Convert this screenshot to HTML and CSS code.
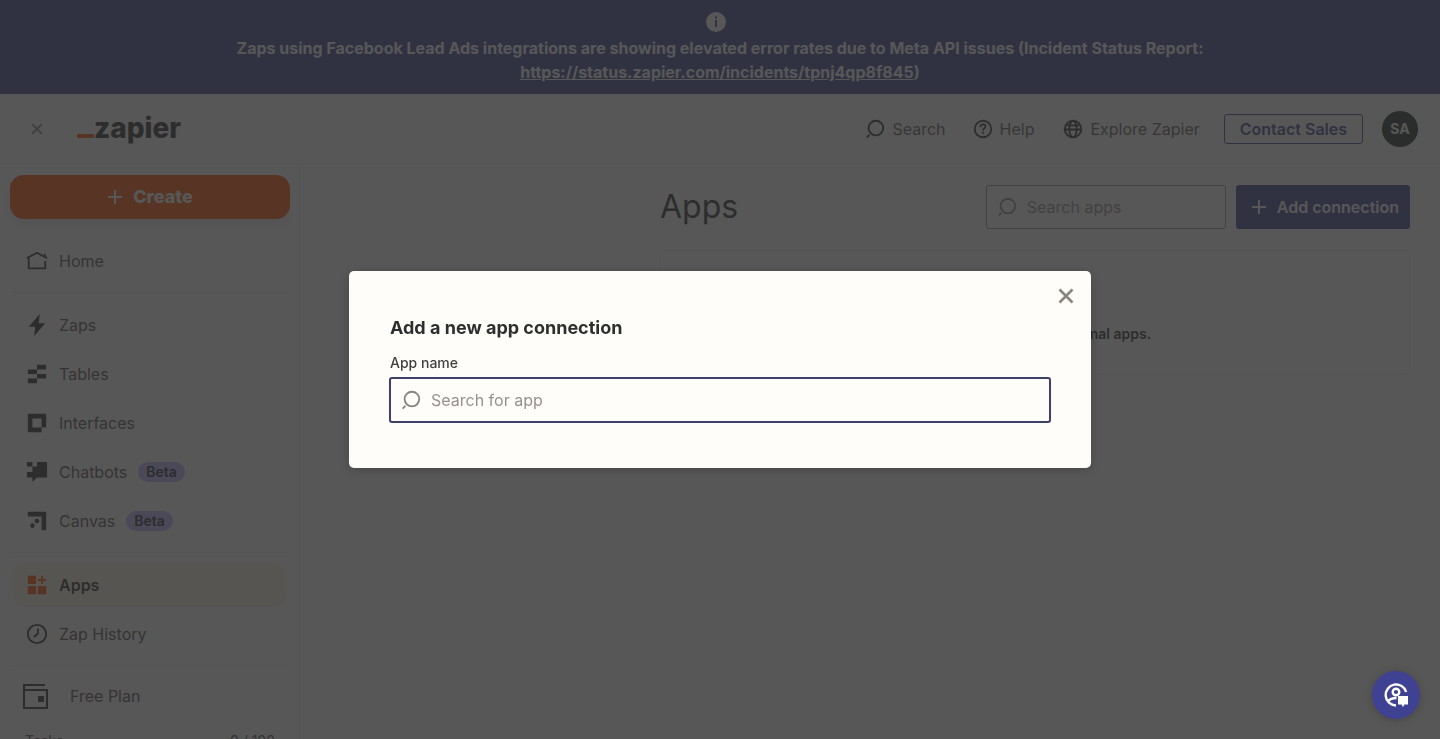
FILE: index.html
```html
<!DOCTYPE html>
<html lang="en">
<head>
<meta charset="utf-8">
<meta name="viewport" content="width=device-width, initial-scale=1">
<title>Apps | Zapier</title>
<link rel="stylesheet" href="styles.css">
</head>
<body>
<svg class="sprite" aria-hidden="true">
  <symbol id="i-search" viewBox="0 0 24 24"><circle cx="13" cy="11" r="8" fill="none" stroke="currentColor" stroke-width="2"/><path d="M5.2 17.6 6.600 19 3.600 22 2.200 20.600z" fill="currentColor"/></symbol>
  <symbol id="i-plus" viewBox="0 0 16 16"><path d="M8 1v14M1 8h14" fill="none" stroke="currentColor" stroke-width="2"/></symbol>
  <symbol id="i-close" viewBox="0 0 16 16"><path d="M1.500 1.500l13 13M14.500 1.500l-13 13" fill="none" stroke="currentColor" stroke-width="2.600"/></symbol>
</svg>

<div class="page">
  <aside class="banner">
    <svg class="banner-icon" viewBox="0 0 24 24" aria-hidden="true"><circle cx="12" cy="12" r="10" fill="currentColor"/><path d="M11 6.500h2v2h-2zM11 10h2v7h-2z" fill="#3d4592"/></svg>
    <p class="banner-text">Zaps using Facebook Lead Ads integrations are showing elevated error rates due to Meta API issues (Incident Status Report: <a href="#">https://status.zapier.com/incidents/tpnj4qp8f845</a>)</p>
  </aside>

  <header class="topbar">
    <button class="icon-btn" aria-label="Close sidebar"><svg width="12" height="12"><use href="#i-close"/></svg></button>
    <a class="logo" href="#"><span class="logo-dash"></span>zapier</a>
    <nav class="topnav">
      <a class="toplink" href="#"><svg width="22" height="22"><use href="#i-search"/></svg>Search</a>
      <a class="toplink" href="#"><svg width="22" height="22" viewBox="0 0 24 24" fill="none" stroke="currentColor" stroke-width="2"><circle cx="12" cy="12" r="9"/><path d="M9.300 10.200V9.500C9.300 8 10.400 7 12 7s2.700 1 2.700 2.300c0 1.900-2.700 2-2.700 4.200M12 15v2.200"/></svg>Help</a>
      <a class="toplink explore" href="#"><svg width="22" height="22" viewBox="0 0 24 24" fill="none" stroke="currentColor" stroke-width="2"><circle cx="12" cy="12" r="9"/><ellipse cx="12" cy="12" rx="4" ry="9"/><path d="M2 12.500h20M5 8h14"/></svg>Explore Zapier</a>
    </nav>
    <button class="contact">Contact Sales</button>
    <button class="avatar" aria-label="Account">SA</button>
  </header>

  <div class="body">
    <nav class="sidebar">
      <button class="create"><svg width="16" height="16"><use href="#i-plus"/></svg>Create</button>
      <div class="group">
        <a class="item" href="#"><svg viewBox="0 0 24 24" fill="none" stroke="currentColor" stroke-width="2"><path d="M21 12v8H3V9M.800 9 12 3l11.200 6M20.500 8V4"/></svg>Home</a>
      </div>
      <div class="group">
        <a class="item" href="#"><svg class="solid" viewBox="0 0 24 24"><path d="M15 0 3 14h7L9 24 21 10h-7z"/></svg>Zaps</a>
        <a class="item" href="#"><svg class="solid" viewBox="0 0 24 24"><path d="M12 2h10v5H12zM2 7h10v5H2zM12 12h10v5H12zM2 17h10v5H2z"/></svg>Tables</a>
        <a class="item" href="#"><svg class="solid" viewBox="0 0 24 24"><path fill-rule="evenodd" d="M2 2h20v15h-5v5H2zM7 7v10h10V7z"/></svg>Interfaces</a>
        <a class="item" href="#"><svg class="solid" viewBox="0 0 24 24"><path d="M1 1h6v5h5V1h11v17H12l-5 5v-5H1v-6h6V6H1z"/></svg>Chatbots<span class="beta">Beta</span></a>
        <a class="item" href="#"><svg class="solid" viewBox="0 0 24 24"><path d="M2 2h20v20h-5V7H2z"/><circle cx="12" cy="12" r="2.500"/><circle cx="7" cy="17" r="2.500"/></svg>Canvas<span class="beta">Beta</span></a>
      </div>
      <div class="group">
        <a class="item active" href="#"><svg viewBox="0 0 24 24" fill="#ff4f00"><path d="M2 2h9v9H2zM2 13h9v9H2zM13 13h9v9h-9zM16.500 2h2v3.500H22v2h-3.500V11h-2V7.500H13v-2h3.500z"/></svg>Apps</a>
        <a class="item" href="#"><svg viewBox="0 0 24 24" fill="none" stroke="currentColor" stroke-width="2"><circle cx="12" cy="12" r="10"/><path d="M13 6v5.500L8.500 15.500"/></svg>Zap History</a>
      </div>
      <div class="group plan-group">
        <a class="plan" href="#"><svg viewBox="0 0 28 28" fill="none" stroke="currentColor" stroke-width="2"><path d="M24 3H3v23h23V8H3"/><path d="M18 15h4v4h-4z" fill="currentColor"/></svg>Free Plan</a>
        <div class="usage"><span>Tasks</span><span>0 / 100</span></div>
      </div>
    </nav>

    <main class="main">
      <div class="content">
        <div class="heading">
          <h1>Apps</h1>
          <label class="field search-apps"><svg width="22" height="22"><use href="#i-search"/></svg><input type="search" placeholder="Search apps" aria-label="Search apps"></label>
          <button class="add"><svg width="16" height="16"><use href="#i-plus"/></svg>Add connection</button>
        </div>
        <section class="empty"><p>You don't have any personal apps.</p></section>
      </div>
    </main>
  </div>
</div>

<div class="overlay">
  <section class="dialog" role="dialog" aria-modal="true" aria-labelledby="dialog-title">
    <button class="dialog-close" aria-label="Close"><svg width="16" height="16"><use href="#i-close"/></svg></button>
    <h2 id="dialog-title">Add a new app connection</h2>
    <label class="dialog-label" for="app-name">App name</label>
    <div class="field app-field"><svg width="22" height="22"><use href="#i-search"/></svg><input id="app-name" type="text" placeholder="Search for app"></div>
  </section>
</div>

<button class="support" aria-label="Support"><svg width="26" height="26" viewBox="0 0 26 26" fill="none" stroke="currentColor" stroke-width="2.400"><path d="M23.200 10A10.500 10.500 0 1 0 13 23.500"/><circle cx="13" cy="10" r="3.300"/><path d="M5 19.500c2-3 5-3.500 8.500-3.500"/><path d="M15 14h10v8.500h-3.500L20 25l-1.500-2.500H15z" fill="currentColor" stroke="none"/></svg></button>
</body>
</html>
```
FILE: styles.css
```css
* { box-sizing: border-box; }
body {
  margin: 0;
  font: 400 16px/24px Inter, "Liberation Sans", sans-serif;
  color: #2d2e2e;
  background: #fff;
}
a { color: inherit; text-decoration: none; }
button { font: inherit; color: inherit; border: 0; background: none; padding: 0; cursor: pointer; }
h1, h2, p { margin: 0; }
svg { flex: none; }
.sprite { position: absolute; width: 0; height: 0; }

.page { display: flex; flex-direction: column; height: 100vh; overflow: hidden; }

.banner {
  flex: none;
  display: flex;
  flex-direction: column;
  align-items: center;
  gap: 2px;
  padding: 10px 24px;
  background: #3d4592;
  color: #fff;
  text-align: center;
}
.banner-icon { width: 24px; height: 24px; margin-right: 8px; }
.banner-text { max-width: 1000px; font-weight: 700; }
.banner-text a { text-decoration: underline; }

.topbar {
  flex: none;
  display: flex;
  align-items: center;
  height: 70px;
  padding: 0 22px 0 31px;
  border-bottom: 1px solid #f2f2f2;
}
.icon-btn { display: flex; color: #888; }
.logo {
  display: flex;
  align-items: baseline;
  margin-left: 34px;
  padding-bottom: 2px;
  font-size: 28px;
  line-height: 32px;
  font-weight: 800;
}
.logo-dash { width: 17px; height: 4px; background: #ff4f00; }
.topnav { display: flex; gap: 26px; margin-left: auto; color: #5f5c5a; }
.toplink { display: flex; align-items: center; gap: 6px; }
.toplink svg { color: #2d2e2e; }
.explore { margin-left: 2px; }
.contact {
  height: 30px;
  margin-left: 24px;
  padding: 0 15px;
  border: 1px solid #3d4592;
  border-radius: 3px;
  color: #3d4592;
  font-weight: 600;
}
.avatar {
  width: 36px;
  height: 36px;
  margin-left: 19px;
  border-radius: 50%;
  background: #1f2e24;
  color: #fff;
  font-size: 14px;
  font-weight: 700;
}

.body { flex: 1; display: flex; min-height: 0; }
.sidebar {
  flex: none;
  width: 300px;
  padding: 11px 10px 0;
  border-right: 1px solid #ececec;
  overflow: hidden;
}
.create {
  display: flex;
  align-items: center;
  justify-content: center;
  gap: 10px;
  width: 280px;
  height: 44px;
  margin-bottom: 10px;
  border-radius: 14px;
  background: #ff4f00;
  color: #fff;
  font-size: 18px;
  font-weight: 800;
  box-shadow: 0 8px 8px #eee;
}
.group {
  display: flex;
  flex-direction: column;
  gap: 5px;
  padding: 10px 2px 9px 3px;
  border-bottom: 1px solid #eee;
}
.item {
  display: flex;
  align-items: center;
  gap: 11px;
  height: 44px;
  padding: 0 13px;
  border-radius: 14px;
  color: #574e4c;
}
.item svg { width: 22px; height: 22px; color: #2d2e2e; }
.item .solid { fill: currentColor; }
.item.active { background: #fff3e0; color: #2d2e2e; font-weight: 600; }
.beta {
  padding: 0 8px;
  border-radius: 10px;
  background: #c2b8ff;
  color: #2d2e2e;
  font-size: 14px;
  line-height: 20px;
  font-weight: 600;
}
.plan-group { padding-top: 9px; border-bottom: 0; gap: 10px; color: #574e4c; }
.plan { display: flex; align-items: center; gap: 21px; height: 42px; padding-left: 8px; }
.plan svg { width: 28px; height: 28px; color: #2d2e2e; }
.usage { display: flex; justify-content: space-between; padding: 0 12px; font-size: 14px; line-height: 28px; }

.main { flex: 1; display: flex; justify-content: flex-end; padding: 21px 30px; }
.content { flex: 0 1 750px; }
.heading { display: flex; align-items: center; gap: 10px; }
.heading h1 { flex: 1; font-size: 32px; line-height: 40px; font-weight: 400; }
.field { display: flex; align-items: center; border-radius: 3px; }
.field input {
  flex: 1;
  min-width: 0;
  padding: 0;
  border: 0;
  outline: 0;
  background: none;
  color: #2d2e2e;
  font: inherit;
}
.field input::placeholder { color: #95928e; opacity: 1; }
.search-apps { width: 240px; height: 44px; padding: 0 9px; gap: 9px; border: 1px solid #95928e; color: #95928e; }
.add {
  display: flex;
  align-items: center;
  gap: 10px;
  height: 44px;
  padding: 0 11px 0 15px;
  border-radius: 3px;
  background: #3d4592;
  color: #fff;
  font-weight: 600;
}
.empty {
  display: flex;
  justify-content: center;
  margin-top: 21px;
  padding: 73px 20px 30px;
  border: 1px solid #f0f0f0;
  border-radius: 4px;
  font-size: 14px;
  line-height: 20px;
  font-weight: 600;
}

.overlay {
  position: fixed;
  inset: 0;
  display: flex;
  align-items: center;
  justify-content: center;
  background: rgba(45, 45, 45, 0.8);
}
.dialog {
  position: relative;
  width: 742px;
  max-width: 90%;
  padding: 45px 40px;
  border-radius: 5px;
  background: #fffdf9;
  box-shadow: 0 2px 10px rgba(0, 0, 0, 0.2);
}
.dialog h2 { margin-bottom: 13px; padding-left: 1px; font-size: 18px; line-height: 24px; font-weight: 700; }
.dialog-label { display: block; margin-bottom: 4px; padding-left: 1px; font-size: 14px; line-height: 20px; font-weight: 500; color: #403f3e; }
.app-field { height: 46px; padding: 0 9px; gap: 9px; border: 2px solid #3d3f6e; color: #88857f; }
.dialog-close { position: absolute; top: 17px; right: 17px; display: flex; color: #88857f; }
.support {
  position: fixed;
  right: 20px;
  bottom: 20px;
  display: flex;
  align-items: center;
  justify-content: center;
  width: 48px;
  height: 48px;
  border-radius: 50%;
  background: #3f4192;
  color: #fff;
  box-shadow: 0 1px 8px rgba(0, 0, 0, 0.2);
}
```
